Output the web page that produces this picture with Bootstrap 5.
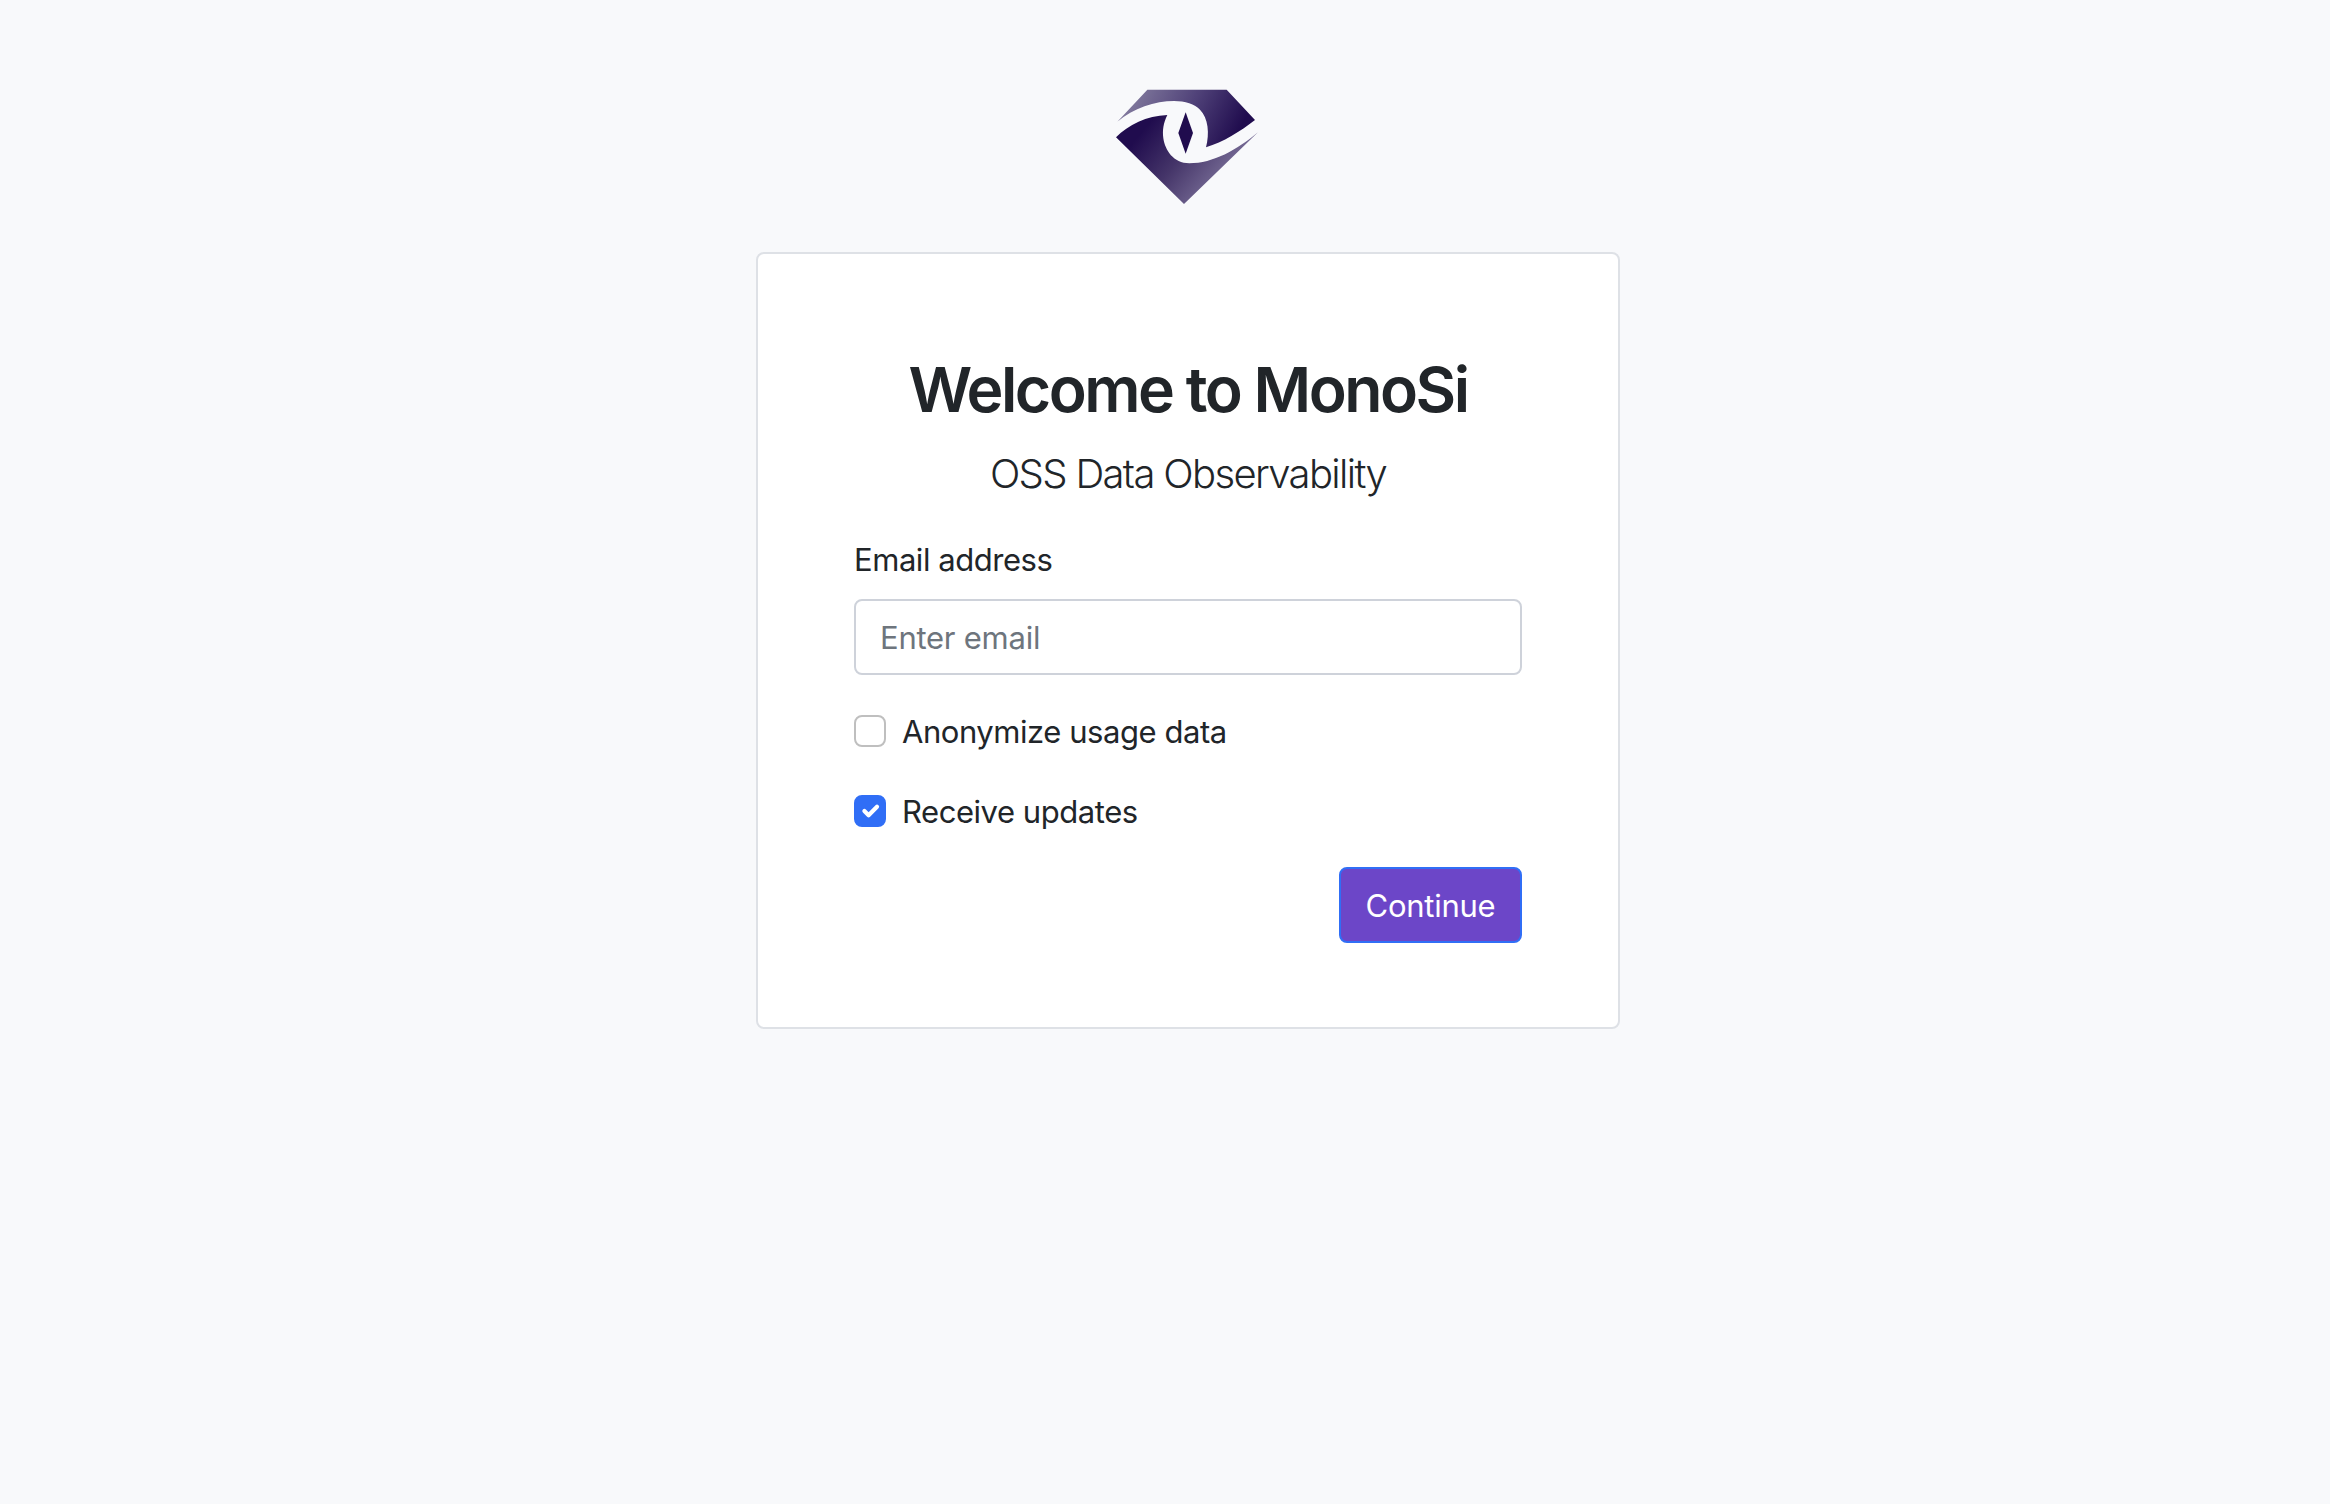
<!DOCTYPE html>
<html lang="en">
<head>
<meta charset="utf-8">
<title>MonoSi</title>
<link href="https://cdn.jsdelivr.net/npm/bootstrap@5.3.0/dist/css/bootstrap.min.css" rel="stylesheet">
<style>
html{font-size:32px}
body{font-family:Inter,"Liberation Sans",sans-serif;color:#212529;background:#f8f9fb;min-height:100vh;--bs-border-width:2px}
.page-shell{padding:75px 0 0 46px}
.brand-mark{width:180px;height:145px;margin-left:4px}
.signup-card{width:864px;border:2px solid #dee1e6;border-radius:8px;padding:96px 96px 84px;--bs-card-bg:#fff}
.signup-title{font-size:62.5px;line-height:77px;font-weight:600;letter-spacing:-2.5px;padding-top:1px;margin-bottom:15px}
.signup-sub{font-size:40px;font-weight:340;line-height:60px;letter-spacing:-1.65px;padding-top:1px;margin-bottom:31px}
.signup-card label{padding-top:1px}
.signup-card .form-label{margin-bottom:15px}
.signup-card .form-check{height:48px}
.signup-card label span{font-size:31px;font-weight:420;letter-spacing:-.45px}
.signup-card .form-control{border:2px solid #ced2da;border-radius:8px;padding:12px 24px;height:76px;font-size:31px;font-weight:420;letter-spacing:-.25px}
.signup-card .form-control::placeholder{color:#6e757d}
.signup-card .form-check-input{border:2px solid #bfbfbf;border-radius:8px}
.signup-card .form-check-input:checked{background-color:#306ef6;border-color:#306ef6}
.btn-continue{--bs-btn-color:#fff;--bs-btn-bg:#6c46c8;--bs-btn-border-color:#306ef6;width:183px;height:76px;padding:13px 0 11px;border-width:2px;border-radius:8px;font-size:31px;font-weight:430;letter-spacing:-.25px}
</style>
<script src="https://cdn.jsdelivr.net/npm/bootstrap@5.3.0/dist/js/bootstrap.bundle.min.js"></script>
</head>
<body>
<main class="page-shell d-flex flex-column align-items-center">
<svg class="brand-mark mb-3" viewBox="0 0 540 435" aria-label="MonoSi">
<defs>
<linearGradient id="gTop" gradientUnits="userSpaceOnUse" x1="110" y1="50" x2="400" y2="200"><stop offset="0" stop-color="#7e769b"/><stop offset=".5" stop-color="#504279"/><stop offset="1" stop-color="#200c4e"/></linearGradient>
<linearGradient id="gBottom" gradientUnits="userSpaceOnUse" x1="130" y1="165" x2="345" y2="340"><stop offset="0" stop-color="#200c4e"/><stop offset=".5" stop-color="#453569"/><stop offset="1" stop-color="#756a94"/></linearGradient>
</defs>
<path fill="url(#gTop)" d="M142 44H380L465 135C420 170 370 201 318 217C329 175 325 130 300 104C285 88 255 78 222 78C165 78 100 100 52 140Z"/>
<path fill="url(#gBottom)" d="M48 187C85 150 140 122 202 120C190 145 187 165 190 190C195 225 220 265 268 265C340 265 410 225 474 172L252 387Z"/>
<path fill="#200c4e" d="M257 112L279 174L257 236L235 174Z"/>
</svg>
<section class="card signup-card">
<h1 class="signup-title text-center">Welcome to MonoSi</h1>
<p class="signup-sub text-center">OSS Data Observability</p>
<form>
<div class="mb-3"><label class="form-label" for="email"><span>Email address</span></label><input type="email" class="form-control" id="email" placeholder="Enter email"></div>
<div class="form-check mb-3"><input class="form-check-input" type="checkbox" id="anon"><label class="form-check-label d-block" for="anon"><span>Anonymize usage data</span></label></div>
<div class="form-check mb-3"><input class="form-check-input" type="checkbox" id="updates" checked><label class="form-check-label d-block" for="updates"><span>Receive updates</span></label></div>
<div class="d-flex justify-content-end"><button type="button" class="btn btn-continue">Continue</button></div>
</form>
</section>
</main>
</body>
</html>
